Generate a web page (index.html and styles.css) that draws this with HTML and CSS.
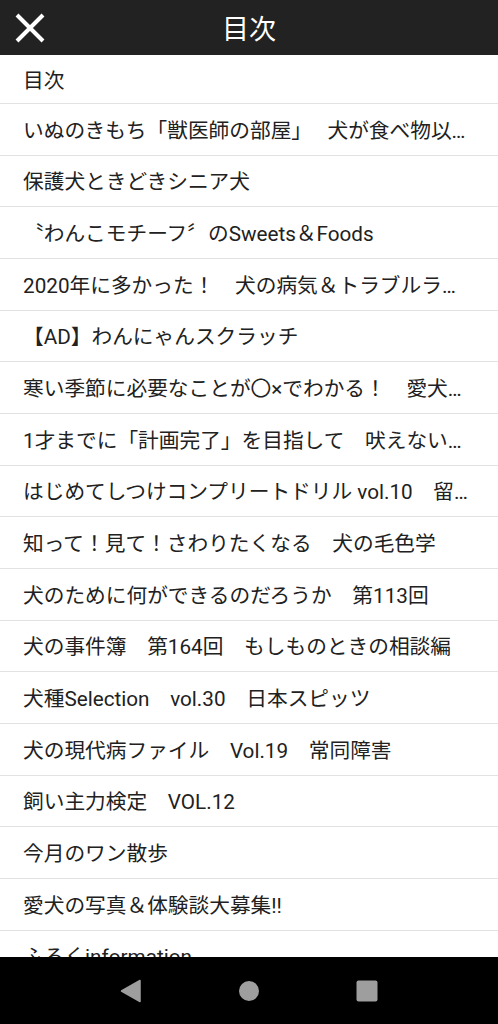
FILE: index.html
```html
<!DOCTYPE html>
<html>
  <head>
    <meta charset="utf-8">
    <title>目次</title>
    <link rel="stylesheet" href="styles.css">
  </head>
  <body>
    <div class="screen">

      <div class="topbar">
        <button class="close" aria-label="閉じる">
          <svg width="30" height="30" viewBox="0 0 30 30">
            <path d="M2 2 L28 28 M28 2 L2 28" stroke="#ffffff" stroke-width="4" fill="none"/>
          </svg>
        </button>
        <h1 class="title">目次</h1>
        <span></span>
      </div>

      <ul class="toc">
        <li class="toc-item first">目次</li>
        <li class="toc-item">いぬのきもち「獣医師の部屋」　 犬が食べ物以…</li>
        <li class="toc-item">保護犬ときどきシニア犬</li>
        <li class="toc-item">〝わんこモチーフ〞のSweets＆Foods</li>
        <li class="toc-item">2020年に多かった！　犬の病気＆トラブルラ…</li>
        <li class="toc-item">【AD】わんにゃんスクラッチ</li>
        <li class="toc-item">寒い季節に必要なことが〇×でわかる！　愛犬…</li>
        <li class="toc-item">1才までに「計画完了」を目指して　吠えない…</li>
        <li class="toc-item">はじめてしつけコンプリートドリル vol.10　留…</li>
        <li class="toc-item">知って！見て！さわりたくなる　犬の毛色学</li>
        <li class="toc-item">犬のために何ができるのだろうか　第113回</li>
        <li class="toc-item">犬の事件簿　第164回　もしものときの相談編</li>
        <li class="toc-item">犬種Selection　vol.30　日本スピッツ</li>
        <li class="toc-item">犬の現代病ファイル　Vol.19　常同障害</li>
        <li class="toc-item">飼い主力検定　VOL.12</li>
        <li class="toc-item">今月のワン散歩</li>
        <li class="toc-item">愛犬の写真＆体験談大募集!!</li>
        <li class="toc-item">ふろくinformation</li>
      </ul>

      <div class="navbar">
        <span class="nav-btn">
          <svg width="22" height="24" viewBox="0 0 22 24">
            <path d="M20 1.5 L20 22.5 L1.5 12 Z" fill="#9e9e9e" stroke="#9e9e9e" stroke-width="1.5" stroke-linejoin="round"/>
          </svg>
        </span>
        <span class="nav-btn">
          <svg width="22" height="22" viewBox="0 0 22 22">
            <circle cx="11" cy="11" r="10" fill="#9e9e9e"/>
          </svg>
        </span>
        <span class="nav-btn">
          <svg width="22" height="22" viewBox="0 0 22 22">
            <rect x="0.5" y="0.5" width="21" height="21" rx="2" fill="#9e9e9e"/>
          </svg>
        </span>
      </div>

    </div>
  </body>
</html>
```

FILE: styles.css
```css
body {
  margin: 0;
  font-family: Roboto, "Noto Sans CJK JP", sans-serif;
  background-color: #ffffff;
  color: #212121;
}

.screen {
  display: flex;
  flex-direction: column;
  height: 1024px;
  overflow: hidden;
}

.topbar {
  display: grid;
  grid-template-columns: 60px 1fr 60px;
  align-items: center;
  height: 55px;
  flex-shrink: 0;
  background-color: #222222;
}

.close {
  display: flex;
  align-items: center;
  padding: 0 0 0 15px;
  margin: 0;
  border: none;
  background: none;
  cursor: pointer;
}

.title {
  margin: 0;
  padding-top: 6px;
  text-align: center;
  color: #ffffff;
  font-size: 27px;
  font-weight: normal;
  line-height: 49px;
}

.toc {
  flex: 1;
  margin: 0;
  padding: 0;
  list-style: none;
  overflow: hidden;
}

.toc-item {
  box-sizing: border-box;
  display: flex;
  align-items: center;
  height: 51.67px;
  padding: 0 22px 1px 23px;
  font-size: 20.7px;
  white-space: nowrap;
  overflow: hidden;
  text-overflow: ellipsis;
  border-bottom: 1px solid #e2e2e2;
}

.toc-item.first {
  height: 49px;
}

.navbar {
  display: flex;
  justify-content: center;
  align-items: center;
  gap: 78px;
  height: 67px;
  flex-shrink: 0;
  background-color: #000000;
}

.nav-btn {
  display: flex;
  justify-content: center;
  align-items: center;
  width: 40px;
  height: 40px;
}
```
